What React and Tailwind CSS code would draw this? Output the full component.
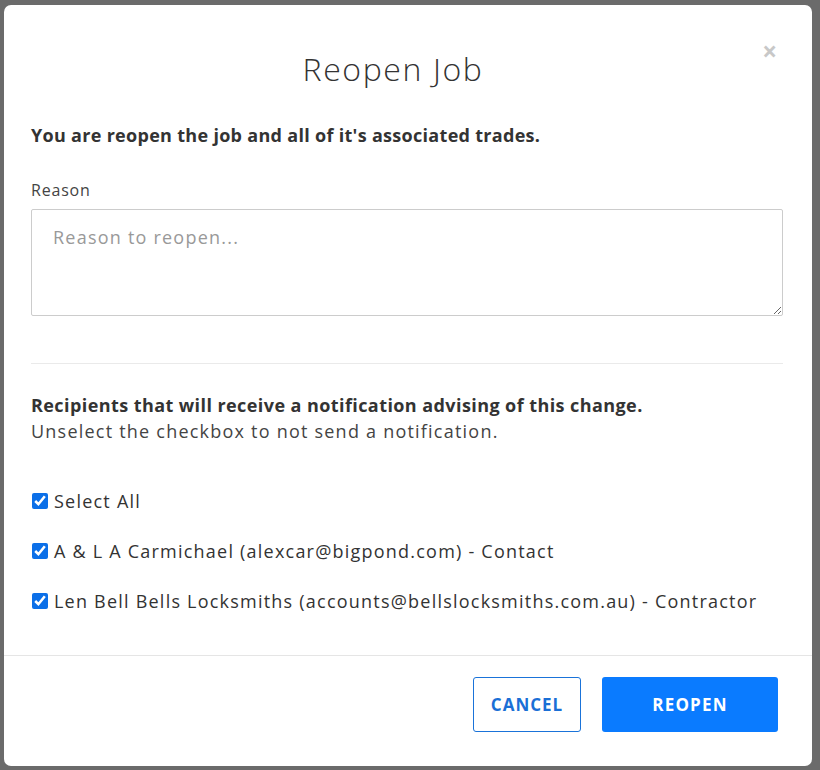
import React, { useState } from 'react';

const recipients = [
  { id: 1, label: 'A & L A Carmichael (alexcar@bigpond.com) - Contact' },
  { id: 2, label: 'Len Bell Bells Locksmiths (accounts@bellslocksmiths.com.au) - Contractor' },
];

const App = () => {
  const [checked, setChecked] = useState({ 1: true, 2: true });
  const [reason, setReason] = useState('');
  const allChecked = recipients.every((r) => checked[r.id]);

  const toggleAll = () => {
    const next = {};
    recipients.forEach((r) => (next[r.id] = !allChecked));
    setChecked(next);
  };

  return (
    <div
      className="min-h-[770px] w-[820px] bg-[#6b6b6b] pt-[5px] pl-[4px]"
      style={{ fontFamily: '"Open Sans", "Noto Sans", sans-serif' }}
    >
      <div className="w-[808px] h-[761px] bg-white rounded-[7px] flex flex-col">
        {/* Header */}
        <div className="relative pt-[45px] pr-[30px] text-center">
          <h1 className="text-[32px] leading-[38px] font-light text-[#333] tracking-[1.6px]">Reopen Job</h1>
          <button className="absolute right-[35px] top-[33px] text-[26px] font-bold text-[#c8c8c8] leading-none">
            ×
          </button>
        </div>

        {/* Body */}
        <div className="pl-[27px] pr-[29px] pt-[34px] flex-1 tracking-[1.22px]">
          <p className="text-[18px] leading-[26px] font-bold text-[#333] tracking-[0.3px]">
            You are reopen the job and all of it's associated trades.
          </p>

          <label className="block mt-[31px] text-[16px] leading-[22px] text-[#444] tracking-[0.8px]">Reason</label>
          <textarea
            value={reason}
            onChange={(e) => setReason(e.target.value)}
            placeholder="Reason to reopen..."
            className="block mt-[8px] w-full h-[107px] border border-[#ccc] rounded-[2px] px-[21px] py-[14px] text-[18px] leading-[26px] text-[#333] placeholder:text-[#999] outline-none"
          />

          <hr className="mt-[47px] border-0 border-t border-[#eaeaea]" />

          <p className="mt-[28px] text-[18px] leading-[26px] font-bold text-[#333] tracking-[0.42px]">
            Recipients that will receive a notification advising of this change.
          </p>
          <p className="text-[18px] leading-[26px] text-[#444]">
            Unselect the checkbox to not send a notification.
          </p>

          <div className="mt-[44px] flex flex-col gap-[24px]">
            <label className="flex items-center gap-[6px] text-[18px] leading-[26px] text-[#333]">
              <input
                type="checkbox"
                checked={allChecked}
                onChange={toggleAll}
                className="w-[16px] h-[16px] accent-[#0b6fe8] ml-[1px]"
              />
              Select All
            </label>
            {recipients.map((r) => (
              <label key={r.id} className="flex items-center gap-[6px] text-[18px] leading-[26px] text-[#333]">
                <input
                  type="checkbox"
                  checked={!!checked[r.id]}
                  onChange={() => setChecked({ ...checked, [r.id]: !checked[r.id] })}
                  className="w-[16px] h-[16px] accent-[#0b6fe8] ml-[1px]"
                />
                {r.label}
              </label>
            ))}
          </div>
        </div>

        {/* Footer */}
        <div className="border-t border-[#e5e5e5] flex justify-end gap-[21px] pr-[34px] pt-[21px] pb-[34px]">
          <button className="w-[108px] h-[55px] border border-[#1a73d9] rounded-[3px] text-[#1a6fd6] text-[17px] font-bold tracking-[1px]">
            CANCEL
          </button>
          <button className="w-[176px] h-[55px] bg-[#0a7bff] rounded-[3px] text-white text-[17px] font-bold tracking-[1.2px]">
            REOPEN
          </button>
        </div>
      </div>
    </div>
  );
};

export default App;
